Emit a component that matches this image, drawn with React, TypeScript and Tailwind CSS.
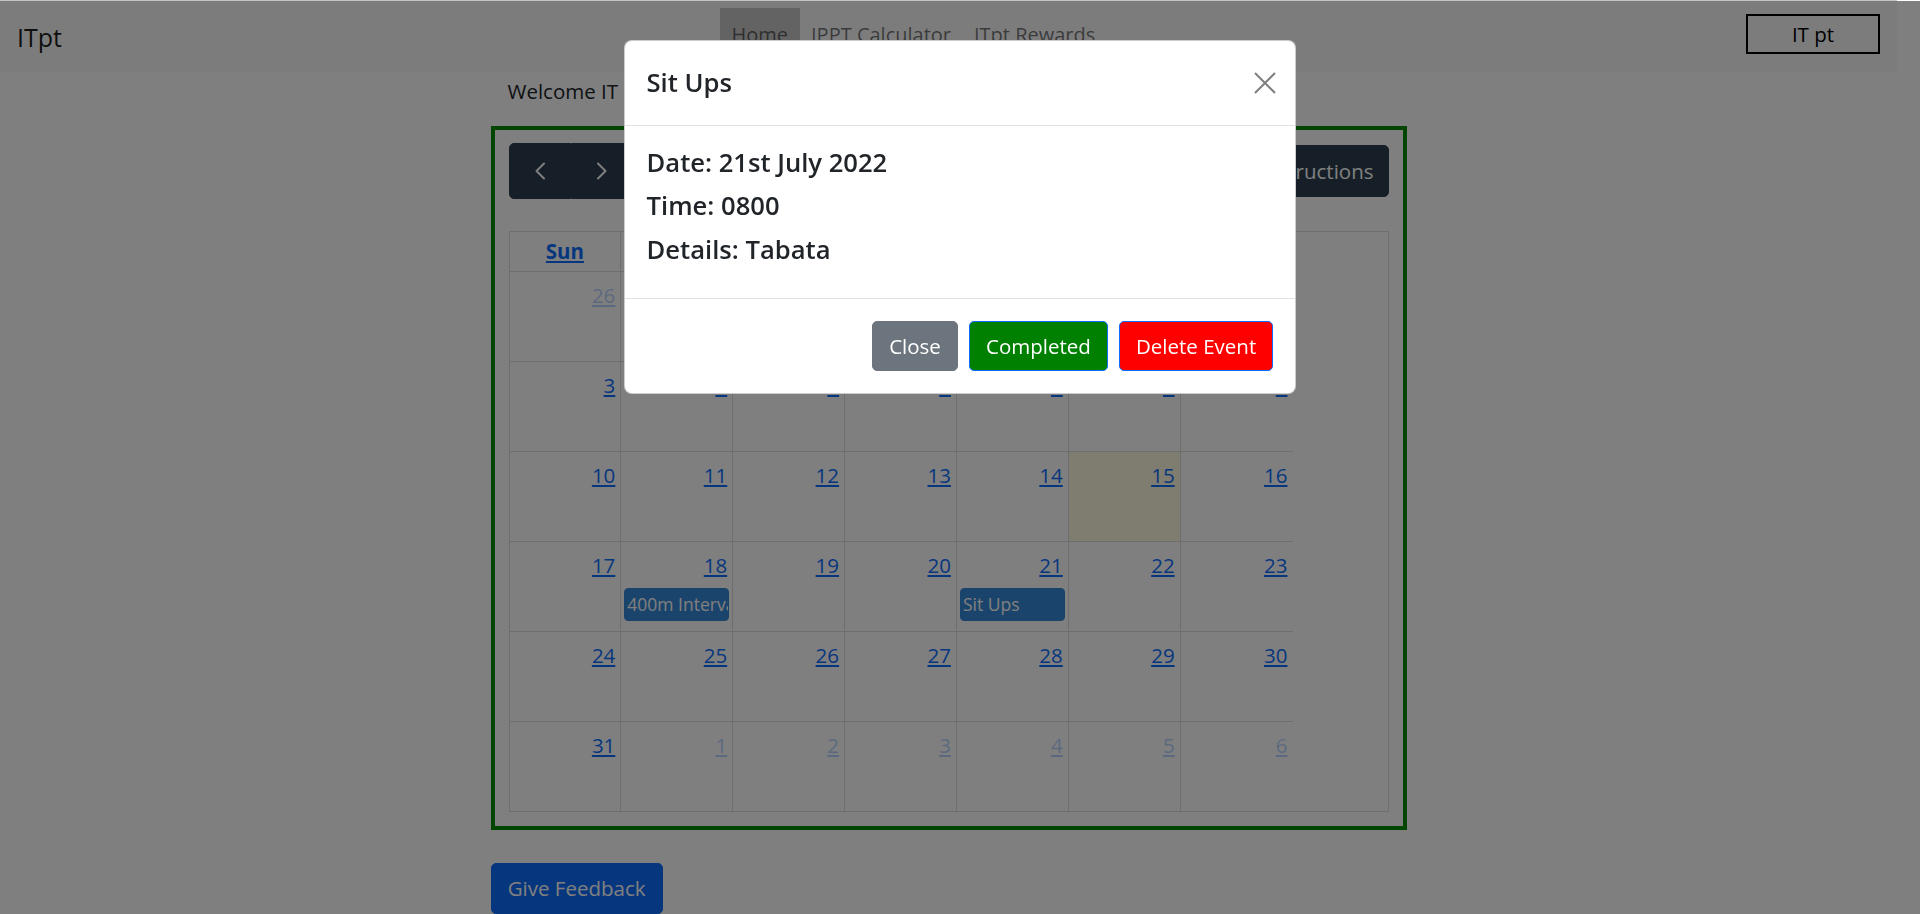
import React from 'react'

type Day = { n: number; other?: boolean; today?: boolean; event?: string }

const weeks: Day[][] = [
  [{ n: 26, other: true }, { n: 27, other: true }, { n: 28, other: true }, { n: 29, other: true }, { n: 30, other: true }, { n: 1 }, { n: 2 }],
  [{ n: 3 }, { n: 4 }, { n: 5 }, { n: 6 }, { n: 7 }, { n: 8 }, { n: 9 }],
  [{ n: 10 }, { n: 11 }, { n: 12 }, { n: 13 }, { n: 14 }, { n: 15, today: true }, { n: 16 }],
  [{ n: 17 }, { n: 18, event: '400m Intervals' }, { n: 19 }, { n: 20 }, { n: 21, event: 'Sit Ups' }, { n: 22 }, { n: 23 }],
  [{ n: 24 }, { n: 25 }, { n: 26 }, { n: 27 }, { n: 28 }, { n: 29 }, { n: 30 }],
  [{ n: 31 }, { n: 1, other: true }, { n: 2, other: true }, { n: 3, other: true }, { n: 4, other: true }, { n: 5, other: true }, { n: 6, other: true }],
]

const dayNames = ['Sun', 'Mon', 'Tue', 'Wed', 'Thu', 'Fri', 'Sat']

function Chevron({ dir }: { dir: 'left' | 'right' }) {
  return (
    <svg width="12" height="18" viewBox="0 0 12 18" fill="none" stroke="currentColor" strokeWidth="2" strokeLinecap="round" strokeLinejoin="round">
      {dir === 'left' ? <polyline points="10,1.5 2.5,9 10,16.5" /> : <polyline points="2,1.5 9.5,9 2,16.5" />}
    </svg>
  )
}

function Navbar() {
  return (
    <nav className="flex h-[72px] w-full items-center border-t border-[#c4c4c4] bg-[#f8f9fa]">
      {/* brand column is fixed so the links start where they do in the app */}
      <div className="w-[720px] shrink-0 pl-[17px] text-[25px] leading-[40px] text-black/90">ITpt</div>
      <ul className="flex self-start pt-[7px] text-[20px] leading-[32.4px] text-black/55">
        <li className="bg-[#c6c6c6] px-[11.5px] py-[10.8px]">Home</li>
        <li className="px-[11.5px] py-[10.8px]">IPPT Calculator</li>
        <li className="px-[11.5px] py-[10.8px]">ITpt Rewards</li>
      </ul>
      <button className="ml-auto mr-[17px] mt-[13px] h-[40px] w-[134px] self-start border-2 border-black text-[20.5px] leading-[32px] text-black">
        IT pt
      </button>
    </nav>
  )
}

function Calendar() {
  return (
    <div className="border-4 border-[#008c00] px-[14px] pt-[13px] pb-[14px]">
      {/* toolbar */}
      <div className="mb-[32px] flex h-[56px] items-center justify-between">
        <div className="flex">
          <button className="flex h-[56px] w-[62px] items-center justify-center rounded-l-[5px] border border-[#2c3e50] bg-[#2c3e50] text-white">
            <Chevron dir="left" />
          </button>
          <button className="flex h-[56px] w-[62px] items-center justify-center rounded-r-[5px] border border-[#2c3e50] bg-[#2c3e50] text-white">
            <Chevron dir="right" />
          </button>
        </div>
        <h2 className="text-[36px] leading-[44px] text-[#212529]">July 2022</h2>
        <button className="h-[52px] rounded-[5px] border border-[#2c3e50] bg-[#2c3e50] px-[14px] text-[20.5px] text-white">
          Instructions
        </button>
      </div>

      {/* month grid */}
      <div className="h-[581px] border border-[#dddddd]">
        <div className="w-[783px]">
          <div className="grid h-[39px] grid-cols-7">
            {dayNames.map((d, i) => (
              <div key={d} className={`flex items-center justify-center ${i < 6 ? 'border-r border-[#dddddd]' : ''}`}>
                <span className="text-[20.5px] font-bold leading-[32.4px] text-[#0d6efd] underline">{d}</span>
              </div>
            ))}
          </div>
          {weeks.map((week, wi) => (
            <div key={wi} className="grid h-[90px] grid-cols-7 border-t border-[#dddddd]">
              {week.map((day, di) => (
                <div
                  key={di}
                  className={`flex flex-col ${di < 6 ? 'border-r border-[#dddddd]' : ''} ${day.today ? 'bg-[rgba(255,220,40,0.15)]' : ''}`}
                >
                  <div className={`pt-[7px] pr-[5px] text-right text-[20.5px] leading-[32.4px] ${day.other ? 'opacity-30' : ''}`}>
                    <span className="text-[#0d6efd] underline">{day.n}</span>
                  </div>
                  {day.event && (
                    <div className="mx-[3px] mt-[6.6px] flex h-[33px] items-center overflow-hidden whitespace-nowrap rounded-[4px] border border-[#3788d8] bg-[#3788d8] pl-[2px] text-[17.5px] text-white">
                      {day.event}
                    </div>
                  )}
                </div>
              ))}
            </div>
          ))}
        </div>
      </div>
    </div>
  )
}

function EventModal() {
  return (
    <div className="fixed inset-0 flex justify-center">
      <div className="mt-[40px] h-fit w-[672px] rounded-[8px] border border-black/20 bg-white text-[#212529]">
        <div className="flex items-center justify-between border-b border-[#dee2e6] p-[21.5px]">
          <h5 className="text-[25.6px] font-semibold leading-[40.5px]">Sit Ups</h5>
          <svg className="-mr-[2px]" width="22" height="22" viewBox="0 0 22 22" fill="none" stroke="#000" strokeOpacity="0.5" strokeWidth="2">
            <path d="M1 1 L21 21 M21 1 L1 21" />
          </svg>
        </div>
        <div className="p-[21.6px]">
          <h5 className="mb-[10.8px] text-[25.6px] font-semibold leading-[32.4px]">Date: 21st July 2022</h5>
          <h5 className="mb-[10.8px] text-[25.6px] font-semibold leading-[32.4px]">Time: 0800</h5>
          <h5 className="mb-[10.8px] text-[25.6px] font-semibold leading-[32.4px]">Details: Tabata</h5>
        </div>
        <div className="flex justify-end border-t border-[#dee2e6] p-[16.2px]">
          <button className="m-[5.4px] rounded-[5px] border border-[#6c757d] bg-[#6c757d] px-[16.2px] py-[8.1px] text-[20.5px] leading-[32.4px] text-white">
            Close
          </button>
          <button className="m-[5.4px] rounded-[5px] border border-[#0d6efd] bg-[#008000] px-[16.2px] py-[8.1px] text-[20.5px] leading-[32.4px] text-white">
            Completed
          </button>
          <button className="m-[5.4px] rounded-[5px] border border-[#0d6efd] bg-[#ff0000] px-[16.2px] py-[8.1px] text-[20.5px] leading-[32.4px] text-white">
            Delete Event
          </button>
        </div>
      </div>
    </div>
  )
}

export default function App() {
  return (
    <div className="relative h-[914px] w-full overflow-hidden bg-white pr-[23px] font-['Open_Sans',sans-serif]">
      <Navbar />
      <main className="mx-auto w-[916px]">
        <p className="mt-[3px] mb-[18.6px] pl-[17px] text-[20.5px] leading-[32.4px] text-[#212529]">Welcome IT pt, here is your training plan</p>
        <Calendar />
        <button className="mt-[33px] h-[51px] rounded-[5px] border border-[#0d6efd] bg-[#0d6efd] px-[16.2px] text-[20.5px] text-white">
          Give Feedback
        </button>
      </main>

      {/* modal backdrop */}
      <div className="fixed inset-x-0 bottom-0 top-px bg-black/50" />
      <EventModal />
    </div>
  )
}
